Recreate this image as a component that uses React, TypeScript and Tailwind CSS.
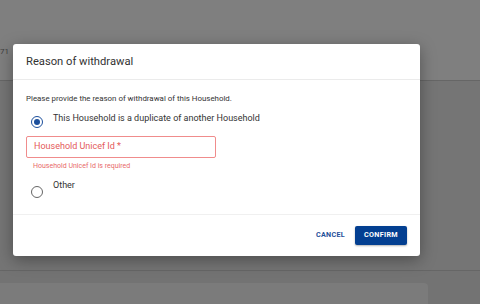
import React from "react";

function Radio({ checked }: { checked: boolean }) {
  return (
    <div
      className={`w-[12px] h-[12px] rounded-full border-[1.5px] flex items-center justify-center shrink-0 ${
        checked ? "border-[#1c4f9c]" : "border-[#666]"
      }`}
    >
      {checked && <div className="w-[6px] h-[6px] rounded-full bg-[#1c4f9c]" />}
    </div>
  );
}

export default function App() {
  return (
    <div
      className="relative w-[480px] h-[304px] overflow-hidden bg-[#757575]"
      style={{ fontFamily: "Roboto, 'Noto Sans', sans-serif" }}
    >
      {/* page behind the overlay */}
      <div className="flex flex-col h-full">
        <div className="h-[81px] bg-[#7f7f7f] border-b border-[#666] flex items-end pb-[22px]">
          <span className="text-[8px] text-[#3f3f3f] -ml-[2px]">.71</span>
        </div>
        <div className="h-[190px] bg-[#757575] border-b border-[#666]" />
        <div className="flex-1 bg-[#737373] pt-[12px]">
          <div className="w-[428px] h-full bg-[#7b7b7b] rounded-tr-[4px]" />
        </div>
      </div>

      {/* dialog */}
      <div className="absolute left-[13px] top-[44px] w-[407px] h-[212px] bg-white rounded-[3px] shadow-[0_4px_16px_rgba(0,0,0,0.35)] flex flex-col">
        <div className="h-[36px] px-[13px] flex items-center border-b border-[#ebebeb]">
          <h2 className="text-[11.2px] text-[#333] leading-none">Reason of withdrawal</h2>
        </div>

        <div className="flex-1 px-[13px]">
          <p className="mt-[14px] text-[7.9px] leading-[10px] text-[#333]">
            Please provide the reason of withdrawal of this Household.
          </p>

          <div className="mt-[8px] flex items-start">
            <div className="ml-[5px] mt-[4px]">
              <Radio checked />
            </div>
            <span className="ml-[10px] text-[9px] leading-[11px] text-[#333] mt-[1px]">
              This Household is a duplicate of another Household
            </span>
          </div>

          <div className="mt-[8px] w-[190px] h-[22px] border border-[#f08c8c] rounded-[2px] flex items-center pl-[7px]">
            <span className="text-[9px] text-[#e45a5a]">Household Unicef Id *</span>
          </div>
          <p className="mt-[4px] pl-[7px] text-[7px] leading-[8px] text-[#e86a6a]">
            Household Unicef Id is required
          </p>

          <div className="mt-[10px] flex items-start">
            <div className="ml-[5px] mt-[6px]">
              <Radio checked={false} />
            </div>
            <span className="ml-[10px] text-[9px] leading-[11px] text-[#333]">Other</span>
          </div>
        </div>

        <div className="h-[42px] border-t border-[#f0f0f0] flex items-center justify-end pr-[13px] gap-[10px]">
          <button className="text-[7.2px] font-bold tracking-[0.3px] text-[#1f4f99] uppercase">
            Cancel
          </button>
          <button className="w-[52px] h-[19px] bg-[#033f91] rounded-[2px] text-[7.2px] font-bold tracking-[0.3px] text-white uppercase shadow-[0_1px_2px_rgba(0,0,0,0.3)]">
            Confirm
          </button>
        </div>
      </div>
    </div>
  );
}
